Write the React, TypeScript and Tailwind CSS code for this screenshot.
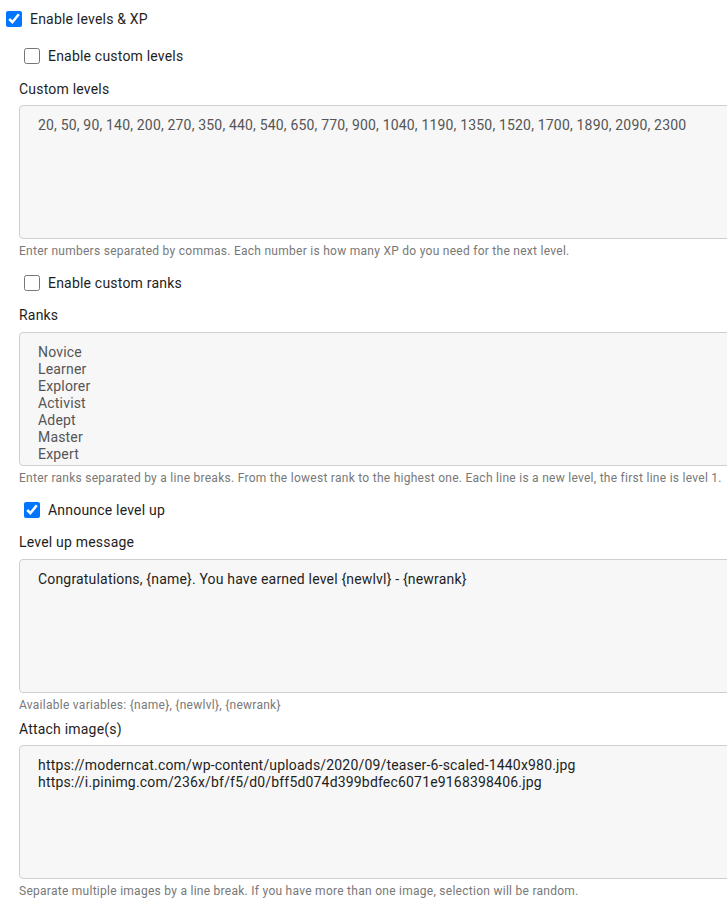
import React from "react";

const levels =
  "20, 50, 90, 140, 200, 270, 350, 440, 540, 650, 770, 900, 1040, 1190, 1350, 1520, 1700, 1890, 2090, 2300";
const ranks = [
  "Novice",
  "Learner",
  "Explorer",
  "Activist",
  "Adept",
  "Master",
  "Expert",
  "Professional",
  "Guru",
].join("\n");
const msg = "Congratulations, {name}. You have earned level {newlvl} - {newrank}";
const imgs =
  "https://moderncat.com/wp-content/uploads/2020/09/teaser-6-scaled-1440x980.jpg\nhttps://i.pinimg.com/236x/bf/f5/d0/bff5d074d399bdfec6071e9168398406.jpg";

function Check({ checked, label, className }: { checked?: boolean; label: string; className: string }) {
  return (
    <label className={"flex h-5 items-center gap-2 text-[14px] leading-5 tracking-[0.2px] text-[#1e1e1e] " + className}>
      <input type="checkbox" defaultChecked={checked} className="m-0 h-4 w-4 shrink-0" />
      <span>{label}</span>
    </label>
  );
}

function Area({ value, dim, className }: { value: string; dim?: boolean; className: string }) {
  return (
    <textarea
      readOnly
      value={value}
      className={
        "block h-[134px] w-[780px] resize-none overflow-hidden rounded-[4px] border border-[#cfcfcf] bg-[#f7f7f7] pl-[18px] pr-4 pt-[11px] text-[14px] leading-[17px] tracking-[0.18px] outline-none " +
        (dim ? "text-[#555555] " : "text-[#1e1e1e] ") +
        className
      }
    />
  );
}

function Label({ text, className }: { text: string; className: string }) {
  return <div className={"text-[14px] leading-5 tracking-[0.2px] text-[#1e1e1e] " + className}>{text}</div>;
}

function Hint({ text, className }: { text: string; className: string }) {
  return <div className={"text-[12px] leading-4 tracking-[0.27px] text-[#787878] " + className}>{text}</div>;
}

export default function App() {
  return (
    <div className="h-[908px] w-full overflow-hidden bg-white" style={{ fontFamily: "Roboto, 'Noto Sans', sans-serif" }}>
      <div className="pl-[6px] pt-[9px]">
        <Check checked label="Enable levels & XP" className="" />
      </div>
      <div className="pl-[19px]">
        <Check label="Enable custom levels" className="ml-[5px] mt-[17px]" />
        <Label text="Custom levels" className="mt-[13px]" />
        <Area value={levels} dim className="mt-[6px]" />
        <Hint
          text="Enter numbers separated by commas. Each number is how many XP do you need for the next level."
          className="mt-1"
        />
        <Check label="Enable custom ranks" className="ml-[5px] mt-[14px]" />
        <Label text="Ranks" className="mt-3" />
        <Area value={ranks} dim className="mt-[7px]" />
        <Hint
          text="Enter ranks separated by a line breaks. From the lowest rank to the highest one. Each line is a new level, the first line is level 1."
          className="mt-1"
        />
        <Check checked label="Announce level up" className="ml-[5px] mt-[14px]" />
        <Label text="Level up message" className="mt-3" />
        <Area value={msg} className="mt-[7px]" />
        <Hint text="Available variables: {name}, {newlvl}, {newrank}" className="mt-1" />
        <Label text="Attach image(s)" className="mt-[6px]" />
        <Area value={imgs} className="mt-[6px]" />
        <Hint
          text="Separate multiple images by a line break. If you have more than one image, selection will be random."
          className="mt-1"
        />
      </div>
    </div>
  );
}
